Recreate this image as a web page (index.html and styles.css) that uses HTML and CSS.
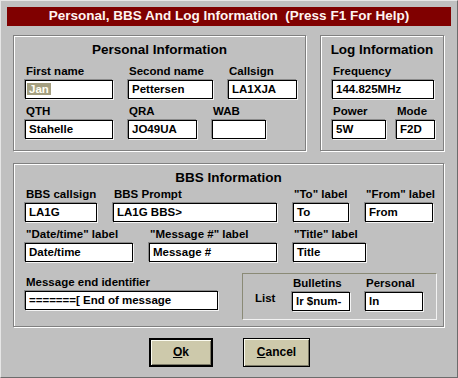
FILE: index.html
```html
<!doctype html>
<html lang="en">
  <head>
    <meta charset="UTF-8" />
    <meta name="viewport" content="width=device-width, initial-scale=1.0" />
    <title>Personal, BBS And Log Information</title>
    <link rel="stylesheet" href="styles.css">
  </head>
  <body>
    <div class="dialog">
      <div class="titlebar">Personal, BBS And Log Information  (Press F1 For Help)</div>

      <div class="content">
        <div class="top-row">
          <div class="group personal">
            <div class="group-title">Personal Information</div>
            <div class="row">
              <div class="field w-first">
                <div class="label">First name</div>
                <div class="edit"><span class="sel">Jan</span></div>
              </div>
              <div class="field w-second">
                <div class="label">Second name</div>
                <div class="edit">Pettersen</div>
              </div>
              <div class="field w-call">
                <div class="label">Callsign</div>
                <div class="edit">LA1XJA</div>
              </div>
            </div>
            <div class="row">
              <div class="field w-first">
                <div class="label">QTH</div>
                <div class="edit">Stahelle</div>
              </div>
              <div class="field w-qra">
                <div class="label">QRA</div>
                <div class="edit">JO49UA</div>
              </div>
              <div class="field w-wab">
                <div class="label">WAB</div>
                <div class="edit"></div>
              </div>
            </div>
          </div>

          <div class="group log">
            <div class="group-title">Log Information</div>
            <div class="row">
              <div class="field w-freq">
                <div class="label">Frequency</div>
                <div class="edit">144.825MHz</div>
              </div>
            </div>
            <div class="row row-tight">
              <div class="field w-power">
                <div class="label">Power</div>
                <div class="edit">5W</div>
              </div>
              <div class="field w-mode">
                <div class="label">Mode</div>
                <div class="edit">F2D</div>
              </div>
            </div>
          </div>
        </div>

        <div class="group bbs">
          <div class="group-title">BBS Information</div>
          <div class="row row-wide">
            <div class="field w-bbscall">
              <div class="label">BBS callsign</div>
              <div class="edit">LA1G</div>
            </div>
            <div class="field w-prompt">
              <div class="label">BBS Prompt</div>
              <div class="edit">LA1G BBS&gt;</div>
            </div>
            <div class="field w-to">
              <div class="label">"To" label</div>
              <div class="edit">To</div>
            </div>
            <div class="field w-from">
              <div class="label">"From" label</div>
              <div class="edit">From</div>
            </div>
          </div>
          <div class="row row-wide">
            <div class="field w-date">
              <div class="label">"Date/time" label</div>
              <div class="edit">Date/time</div>
            </div>
            <div class="field w-msgno">
              <div class="label">"Message #" label</div>
              <div class="edit">Message #</div>
            </div>
            <div class="field w-title">
              <div class="label">"Title" label</div>
              <div class="edit">Title</div>
            </div>
          </div>
          <div class="row-end">
            <div class="field w-end">
              <div class="label">Message end identifier</div>
              <div class="edit">=======[ End of message</div>
            </div>
            <div class="list-box">
              <div class="list-label">List</div>
              <div class="field w-list">
                <div class="label">Bulletins</div>
                <div class="edit">lr $num-</div>
              </div>
              <div class="field w-list">
                <div class="label">Personal</div>
                <div class="edit">ln</div>
              </div>
            </div>
          </div>
        </div>

        <div class="buttons">
          <div class="btn btn-default ok"><u>O</u>k</div>
          <div class="btn cancel"><u>C</u>ancel</div>
        </div>
      </div>
    </div>
  </body>
</html>
```

FILE: styles.css
```css
body {
  margin: 0;
  background: #c0c0c0;
  font-family: "Liberation Sans", Arial, sans-serif;
  color: #000;
}

.dialog {
  width: 458px;
  height: 378px;
  box-sizing: border-box;
  padding: 6px;
  background: #c0c0c0;
  border: 1px solid;
  border-color: #e6e6e6 #6c6c6c #6c6c6c #e6e6e6;
}

.titlebar {
  height: 19px;
  line-height: 18px;
  background: #800000;
  color: #fff4f0;
  font-size: 13.5px;
  font-weight: bold;
  text-align: center;
  white-space: pre;
}

.content {
  padding: 9px 7px 0 6px;
}

.top-row {
  display: flex;
  gap: 14px;
}

/* Group boxes */
.group {
  box-sizing: border-box;
  border: 1px solid #808080;
  box-shadow:
    inset 1px 1px 0 #fff,
    1px 1px 0 #fff;
  padding: 6px 11px 11px;
}

.personal {
  width: 293px;
}

.log {
  width: 124px;
}

.bbs {
  margin-top: 12px;
  padding-bottom: 6px;
}

.group-title {
  font-size: 13.5px;
  line-height: 16px;
  font-weight: bold;
  text-align: center;
  white-space: nowrap;
  margin-bottom: 6px;
}

.log .group-title {
  margin: 0 -6px 6px;
}

.bbs .group-title {
  margin-bottom: 1px;
}

.row {
  display: flex;
  gap: 15px;
}

.row + .row {
  margin-top: 5px;
}

.row-tight {
  gap: 10px;
}

.row-wide {
  gap: 16px;
}

.field {
  display: flex;
  flex-direction: column;
  gap: 2px;
  flex-shrink: 0;
}

.label {
  font-size: 11.5px;
  line-height: 14px;
  font-weight: bold;
  white-space: nowrap;
  padding-left: 1px;
}

.edit {
  height: 19px;
  box-sizing: border-box;
  border: 1px solid #000;
  background: #fff;
  box-shadow:
    -1px -1px 0 #8a8a8a,
    1px 1px 0 #f4f4f4;
  padding: 0 3px;
  font-size: 11.5px;
  line-height: 17px;
  font-weight: bold;
  white-space: nowrap;
  overflow: hidden;
}

.sel {
  background: #a49f80;
  color: #fffff4;
  margin-left: -2px;
  padding: 0 2px 0 2px;
}

/* Field widths */
.w-first { width: 88px; }
.w-second { width: 85px; }
.w-call { width: 69px; }
.w-qra { width: 69px; }
.w-wab { width: 54px; }
.w-freq { width: 102px; }
.w-power { width: 54px; }
.w-mode { width: 39px; }
.w-bbscall { width: 72px; }
.w-prompt { width: 164px; }
.w-to { width: 56px; }
.w-from { width: 68px; }
.w-date { width: 108px; }
.w-msgno { width: 128px; }
.w-title { width: 73px; }
.w-end { width: 193px; margin-top: 2px; }
.w-list { width: 58px; }

/* Last BBS row with the list box */
.row-end {
  display: flex;
  gap: 24px;
  margin-top: 11px;
}

.list-box {
  width: 195px;
  flex-shrink: 0;
  box-sizing: border-box;
  display: flex;
  align-items: flex-end;
  gap: 15px;
  padding: 2px 0 8px 12px;
  border: 1px solid;
  border-color: #8a8a76 #f2f2f2 #f2f2f2 #8a8a76;
}

.list-label {
  width: 20px;
  margin-right: 2px;
  margin-bottom: 6px;
  font-size: 11.5px;
  line-height: 14px;
  font-weight: bold;
}

/* Buttons */
.buttons {
  display: flex;
  justify-content: center;
  gap: 30px;
  margin-top: 11px;
  padding-left: 2px;
}

.btn {
  height: 29px;
  box-sizing: border-box;
  background: #cdc9ab;
  border: 1px solid #000;
  box-shadow:
    inset 1px 1px 0 #fbfbf0,
    inset -1px -1px 0 #7c7a68;
  font-size: 12px;
  font-weight: bold;
  line-height: 27px;
  text-align: center;
}

.btn-default {
  border-width: 2px;
  line-height: 25px;
}

.ok {
  width: 64px;
}

.cancel {
  width: 67px;
}
```
